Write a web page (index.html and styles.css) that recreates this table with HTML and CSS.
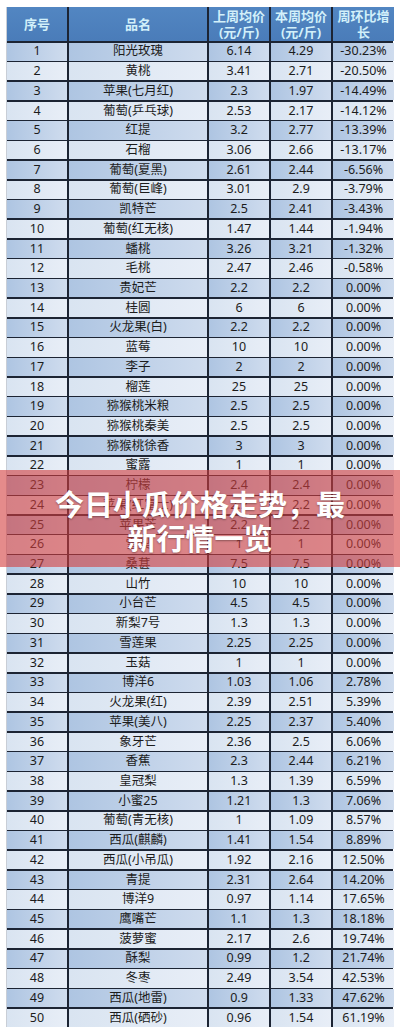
FILE: index.html
```html
<!DOCTYPE html>
<html lang="zh-CN">
<head>
<meta charset="utf-8">
<title>今日小瓜价格走势，最新行情一览</title>
<link rel="stylesheet" href="styles.css">
</head>
<body>
<div class="page">
  <div class="sheet" id="sheet">
    <div class="hd">序号</div>
    <div class="hd">品名</div>
    <div class="hd">上周均价<br>(元/斤)</div>
    <div class="hd">本周均价<br>(元/斤)</div>
    <div class="hd">周环比增<br>长</div>
  </div>
  <div class="banner">
    <h1 class="banner-title">今日小瓜价格走势，最新行情一览</h1>
  </div>
</div>
<script src="app.js"></script>
</body>
</html>
```

FILE: app.js
```js
const rows = [
  ["阳光玫瑰","6.14","4.29","-30.23%"],
  ["黄桃","3.41","2.71","-20.50%"],
  ["苹果(七月红)","2.3","1.97","-14.49%"],
  ["葡萄(乒乓球)","2.53","2.17","-14.12%"],
  ["红提","3.2","2.77","-13.39%"],
  ["石榴","3.06","2.66","-13.17%"],
  ["葡萄(夏黑)","2.61","2.44","-6.56%"],
  ["葡萄(巨峰)","3.01","2.9","-3.79%"],
  ["凯特芒","2.5","2.41","-3.43%"],
  ["葡萄(红无核)","1.47","1.44","-1.94%"],
  ["蟠桃","3.26","3.21","-1.32%"],
  ["毛桃","2.47","2.46","-0.58%"],
  ["贵妃芒","2.2","2.2","0.00%"],
  ["桂圆","6","6","0.00%"],
  ["火龙果(白)","2.2","2.2","0.00%"],
  ["蓝莓","10","10","0.00%"],
  ["李子","2","2","0.00%"],
  ["榴莲","25","25","0.00%"],
  ["猕猴桃米粮","2.5","2.5","0.00%"],
  ["猕猴桃秦美","2.5","2.5","0.00%"],
  ["猕猴桃徐香","3","3","0.00%"],
  ["蜜露","1","1","0.00%"],
  ["柠檬","2.4","2.4","0.00%"],
  ["苹果(红富士)","2.2","2.2","0.00%"],
  ["苹果芒","2.2","2.2","0.00%"],
  ["雪梨","1","1","0.00%"],
  ["桑葚","7.5","7.5","0.00%"],
  ["山竹","10","10","0.00%"],
  ["小台芒","4.5","4.5","0.00%"],
  ["新梨7号","1.3","1.3","0.00%"],
  ["雪莲果","2.25","2.25","0.00%"],
  ["玉菇","1","1","0.00%"],
  ["博洋6","1.03","1.06","2.78%"],
  ["火龙果(红)","2.39","2.51","5.39%"],
  ["苹果(美八)","2.25","2.37","5.40%"],
  ["象牙芒","2.36","2.5","6.06%"],
  ["香蕉","2.3","2.44","6.21%"],
  ["皇冠梨","1.3","1.39","6.59%"],
  ["小蜜25","1.21","1.3","7.06%"],
  ["葡萄(青无核)","1","1.09","8.57%"],
  ["西瓜(麒麟)","1.41","1.54","8.89%"],
  ["西瓜(小吊瓜)","1.92","2.16","12.50%"],
  ["青提","2.31","2.64","14.20%"],
  ["博洋9","0.97","1.14","17.65%"],
  ["鹰嘴芒","1.1","1.3","18.18%"],
  ["菠萝蜜","2.17","2.6","19.74%"],
  ["酥梨","0.99","1.2","21.74%"],
  ["冬枣","2.49","3.54","42.53%"],
  ["西瓜(地雷)","0.9","1.33","47.62%"],
  ["西瓜(硒砂)","0.96","1.54","61.19%"]
];
const sheet = document.getElementById("sheet");
rows.forEach((r, i) => {
  const cls = i % 2 === 0 ? "cell odd" : "cell even";
  [String(i + 1), ...r].forEach(v => {
    const d = document.createElement("div");
    d.className = cls;
    d.textContent = v;
    sheet.appendChild(d);
  });
});
```

FILE: styles.css
```css
* { box-sizing: border-box; }
html, body { margin: 0; padding: 0; background: #ffffff; }
.page {
  position: relative;
  width: 400px;
  height: 1036px;
  padding: 7px 0 0 6px;
  overflow: hidden;
}
.sheet {
  display: grid;
  width: 387px;
  grid-template-columns: 60px 138px 60px 60px 61px;
  grid-template-rows: 34px;
  grid-auto-rows: 18.22px;
  column-gap: 2px;
  row-gap: 1.5px;
  background: #1c2433;
  border-left: 1px solid #c9ced6;
  font-family: "Noto Sans", "Noto Sans CJK SC", sans-serif;
  font-size: 12.5px;
  color: #1c1c1c;
}
.hd {
  background: linear-gradient(180deg, #5286c2, #4a7cb9);
  color: #d2f0fa;
  font-weight: 700;
  font-size: 13px;
  line-height: 16px;
  display: flex;
  align-items: center;
  justify-content: center;
  text-align: center;
}
.cell {
  display: flex;
  align-items: center;
  justify-content: center;
  line-height: 1;
  white-space: nowrap;
}
.odd { background: linear-gradient(90deg, #aec5e2, #cfdcee); }
.even { background: linear-gradient(90deg, #d9e4f1, #e8eef7); }
.banner {
  position: absolute;
  left: 0;
  top: 470px;
  width: 400px;
  height: 97px;
  background: rgba(212, 62, 62, 0.6);
  display: flex;
  align-items: center;
  justify-content: center;
  padding: 2px 45px 0;
}
.banner-title {
  margin: 0;
  font-family: "Noto Sans CJK SC", sans-serif;
  font-size: 29px;
  font-weight: 700;
  line-height: 34px;
  color: #ffffff;
  text-align: center;
  text-shadow: 0 1px 2px rgba(0, 0, 0, 0.35);
}
```
